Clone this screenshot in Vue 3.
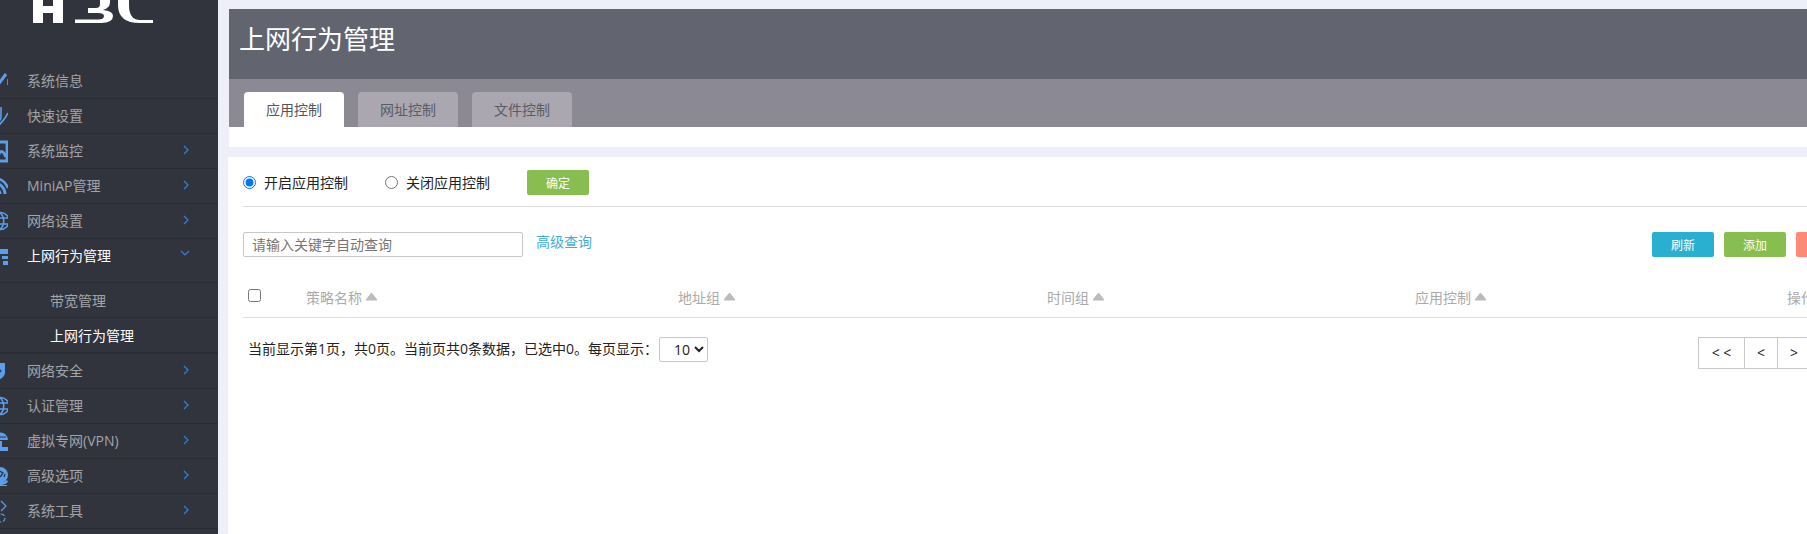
<script setup>
const globe = [
  { s: 'M-8 0a8.5 8.5 0 1 0 17 0a8.5 8.5 0 1 0 -17 0M-8 -3H8M-8 3H8M0 -8.5C-5 -4 -5 4 0 8.5M0 -8.5C5 -4 5 4 0 8.5', w: 1.5 }
]
const menu = [
  { name: '系统信息', icon: [{ s: 'M-3 5L6 -7', w: 3 }, { s: 'M8 -2V4', w: 1.6 }] },
  { name: '快速设置', icon: [{ s: 'M1 -9V1Q1 5 -4 7M8 -3L5 2Q3 5 -1 9', w: 1.6 }] },
  { name: '系统监控', arrow: true, icon: [{ s: 'M-8 -9H7V10H-8ZM-2 6Q1 -5 6 6', w: 2.8 }] },
  { name: 'MiniAP管理', arrow: true, icon: [{ s: 'M-6 2A6 6 0 0 1 0 8M-6 -3A11 11 0 0 1 5 8M-6 -8A16 16 0 0 1 8 2', w: 2.8 }, { f: 'M-8 5H-3V9H-8Z' }] },
  { name: '网络设置', arrow: true, icon: globe },
  { name: '上网行为管理', open: true, active: true, icon: [{ f: 'M-8 -7H8V-2H-8ZM-8 0H-1V3H-8ZM2 0H8V3H2ZM-8 5H-3V9H-8ZM3 5H8V9H3Z' }] },
  { name: '网络安全', arrow: true, icon: [{ f: 'M-8 -8H5V2Q4 7 -2 9Q-8 7 -8 2Z' }, { s: 'M-1 -2L1 0L-1 2', w: 1.2, dark: true }] },
  { name: '认证管理', arrow: true, icon: globe },
  { name: '虚拟专网(VPN)', arrow: true, icon: [{ f: 'M-7 -1A7.5 7.5 0 0 1 8 -1ZM0 0H2V6H0ZM-6 6H8V10H-6Z' }, { s: 'M-1 -8V-1M-5 -4H6', w: 1, dark: true }] },
  { name: '高级选项', arrow: true, icon: [{ f: 'M-8 -1A8 8 0 1 1 8 -1A8 8 0 1 1 -8 -1ZM-4 5Q2 9 7 4L8 6Q5 9 2 9H7V10H-6V9H-2Q-3 8 -6 7Z' }, { s: 'M-2 -6L3 -3L0 1M4 1L5 -2', w: 1.3, dark: true }] },
  { name: '系统工具', arrow: true, icon: [{ s: 'M1 -10L6 -5L1 0', w: 1.2 }, { s: 'M1 3A4 4 0 1 1 1 11A4 4 0 1 1 1 3', w: 1.2, dash: true }] }
]
const subs = [
  { name: '带宽管理' },
  { name: '上网行为管理', active: true }
]
const tabs = [
  { name: '应用控制', active: true },
  { name: '网址控制' },
  { name: '文件控制' }
]
const cols = ['策略名称', '地址组', '时间组', '应用控制']
</script>

<template>
  <div class="page">
    <aside class="side">
      <div class="logo">
        <svg width="170" height="24" viewBox="0 0 170 24">
          <path class="logo-mark" d="M33 -10H43V6H53V-10H63V23H53V13H43V23H33Z" />
          <path class="logo-mark" d="M75 23V19.5H98Q104 19.5 104 16Q104 13 98 13H88V8H96Q100 8 100 4V-10H110V2Q110 8 103 10Q113 11 113 16Q113 23 101 23Z" />
          <path class="logo-mark" d="M153 23H140Q118 23 118 5V-10H129V5Q129 20 140 20H153Z" />
        </svg>
      </div>
      <template v-for="item in menu" :key="item.name">
        <div class="row" :class="{ active: item.active, open: item.open }">
          <svg class="ico" width="20" height="24" viewBox="-12 -12 20 24">
            <template v-for="(p, i) in item.icon" :key="i">
              <path v-if="p.f" class="ico-fill" :d="p.f" />
              <path v-if="p.s" class="ico-line" :class="{ dash: p.dash, dark: p.dark }" :stroke-width="p.w || 1.3" :d="p.s" />
            </template>
          </svg>
          <span class="label">{{ item.name }}</span>
          <svg v-if="item.arrow" class="chev" width="6" height="10" viewBox="0 0 6 10"><path d="M1 1L5 5L1 9" /></svg>
          <svg v-if="item.open" class="chev down" width="10" height="6" viewBox="0 0 10 6"><path d="M1 1L5 5L9 1" /></svg>
        </div>
        <div v-if="item.open" class="subs">
          <div v-for="s in subs" :key="s.name" class="sub" :class="{ active: s.active }">{{ s.name }}</div>
        </div>
      </template>
    </aside>

    <main class="main">
      <section class="top">
        <div class="title">上网行为管理</div>
        <div class="tabs">
          <div v-for="t in tabs" :key="t.name" class="tab" :class="{ active: t.active }">{{ t.name }}</div>
        </div>
        <div class="top-foot"></div>
      </section>

      <section class="card">
        <div class="inner">
          <div class="radios">
            <label class="radio first"><input type="radio" name="ctl" checked /><span>开启应用控制</span></label>
            <label class="radio second"><input type="radio" name="ctl" /><span>关闭应用控制</span></label>
            <button class="btn green ok">确定</button>
          </div>
          <div class="tools">
            <div class="search">
              <input class="query" placeholder="请输入关键字自动查询" />
              <a class="adv">高级查询</a>
            </div>
            <div class="btns">
              <button class="btn blue">刷新</button>
              <button class="btn green">添加</button>
              <button class="btn red">删除</button>
            </div>
          </div>
          <div class="thead">
            <div class="cell"><input type="checkbox" class="check" /></div>
            <div v-for="c in cols" :key="c" class="cell th">
              {{ c }}
              <svg class="sort" width="13" height="9" viewBox="0 0 13 9"><path d="M6.5 1L12 8H1Z" /></svg>
            </div>
            <div class="cell th">操作</div>
          </div>
          <div class="foot">
            <div class="info">
              <span>当前显示第1页，共0页。当前页共0条数据，已选中0。每页显示：</span>
              <select class="size"><option>10</option></select>
            </div>
            <div class="pager">
              <span class="pg wide">&lt; &lt;</span>
              <span class="pg">&lt;</span>
              <span class="pg">&gt;</span>
              <span class="pg wide">&gt; &gt;</span>
            </div>
          </div>
        </div>
      </section>
    </main>
  </div>
</template>

<style>
html, body { margin: 0; overflow: hidden; background: #eeeff8; }
</style>

<style scoped>
.page {
  display: flex;
  width: 1807px;
  height: 534px;
  overflow: hidden;
  background: #eeeff8;
  font-family: "Open Sans", "Noto Sans CJK SC", sans-serif;
  font-size: 14px;
}
.side {
  flex: 0 0 218px;
  width: 218px;
  background: #31343d;
  overflow: hidden;
}
.logo { height: 64px; }
.logo svg { display: block; }
.logo-mark { fill: #fff; }
.row {
  display: flex;
  align-items: center;
  height: 35px;
  box-sizing: border-box;
  border-bottom: 1px solid #2a2c33;
  color: #a3a4a8;
  position: relative;
}
.row.open { height: 44px; align-items: flex-start; padding-top: 6px; }
.row.active, .sub.active { color: #fff; }
.ico { flex: none; margin-left: -12px; margin-right: 19px; display: block; }
.row.open .ico { margin-top: -1px; }
.ico-fill { fill: #5d9eea; }
.ico-line { fill: none; stroke: #5d9eea; }
.ico-line.dash { stroke-dasharray: 4 2; }
.ico-line.dark { stroke: #31343d; }
.label { line-height: 22px; white-space: nowrap; }
.chev { position: absolute; left: 183px; top: 11px; }
.chev path { fill: none; stroke: #2a82dc; stroke-width: 1.2; }
.chev.down { left: 180px; top: 11px; }
.sub {
  height: 35px;
  box-sizing: border-box;
  padding-left: 50px;
  line-height: 35px;
  color: #a3a4a8;
  border-bottom: 1px solid #2a2c33;
}
.sub.active { height: 36px; border-bottom: 2px solid #2b2d34; }

.main { flex: 1; min-width: 0; padding: 0 0 0 10px; overflow: hidden; }
.top { margin: 9px 0 0 1px; background: #fff; height: 138px; }
.title {
  height: 70px;
  line-height: 60px;
  padding-left: 10px;
  font-size: 26px;
  color: #fff;
  background: #62646f;
}
.tabs {
  display: flex;
  gap: 14px;
  height: 48px;
  box-sizing: border-box;
  padding: 13px 0 0 15px;
  background: #8b8993;
}
.tab {
  width: 100px;
  height: 35px;
  line-height: 35px;
  text-align: center;
  color: #5c5b62;
  background: #aaa7b1;
  border-radius: 4px 4px 0 0;
}
.tab.active { background: #fff; color: #555; }
.top-foot { height: 20px; }

.card { margin-top: 10px; height: 377px; background: #fff; padding-left: 15px; overflow: hidden; }
.inner { width: 1615px; }
.radios {
  display: flex;
  align-items: center;
  height: 50px;
  padding-top: 2px;
  box-sizing: border-box;
  border-bottom: 1px solid #ddd;
  color: #222;
}
.radio { display: flex; align-items: center; white-space: nowrap; }
.radio span { margin-top: -2px; }
.radio input { width: 13px; height: 13px; margin: 0 8px 0 0; }
.radio.first { width: 142px; }
.radio.second { width: 142px; }
.btn {
  width: 62px;
  height: 25px;
  padding: 0;
  border: 0;
  border-radius: 2px;
  color: #fff;
  font: inherit;
  font-size: 12px;
}
.green { background: #88be50; }
.blue { background: #29afd0; }
.red { background: #fc8a75; }
.tools {
  display: flex;
  justify-content: space-between;
  align-items: flex-start;
  padding-top: 25px;
}
.search { display: flex; align-items: flex-start; }
.query {
  width: 280px;
  height: 25px;
  box-sizing: border-box;
  padding: 0 8px;
  border: 1px solid #c8c8c8;
  border-radius: 2px;
  font: inherit;
  outline: none;
}
.query::placeholder { color: #757575; }
.adv { margin-left: 13px; color: #41aed8; line-height: 20px; }
.btns { display: flex; gap: 10px; }
.thead {
  display: grid;
  grid-template-columns: 63px 372px 369px 368px 372px 71px;
  align-items: center;
  height: 61px;
  box-sizing: border-box;
  padding-top: 19px;
  border-bottom: 1px solid #ddd;
}
.cell { display: flex; align-items: center; white-space: nowrap; }
.th { color: #aaa; gap: 3px; }
.check { width: 13px; height: 13px; margin: -2px 0 0 5px; }
.sort { display: block; }
.sort path { fill: #bbb; stroke: #bbb; stroke-linejoin: round; }
.foot {
  display: flex;
  justify-content: space-between;
  align-items: flex-start;
  padding-top: 19px;
}
.info {
  display: flex;
  align-items: center;
  padding-left: 5px;
  color: #222;
  white-space: nowrap;
}
.info span { width: 411px; margin-bottom: 3px; }
.size {
  width: 49px;
  height: 25px;
  box-sizing: border-box;
  border: 1px solid #c8c8c8;
  border-radius: 2px;
  background: #fff;
  font: inherit;
  padding-left: 10px;
  color: #222;
}
.pager { display: flex; }
.pg {
  width: 33px;
  height: 32px;
  box-sizing: border-box;
  border: 1px solid #c8c8c8;
  border-left: 0;
  text-align: center;
  line-height: 30px;
  color: #222;
}
.pg.wide { width: 47px; }
.pg:first-child { border-left: 1px solid #c8c8c8; }
</style>
